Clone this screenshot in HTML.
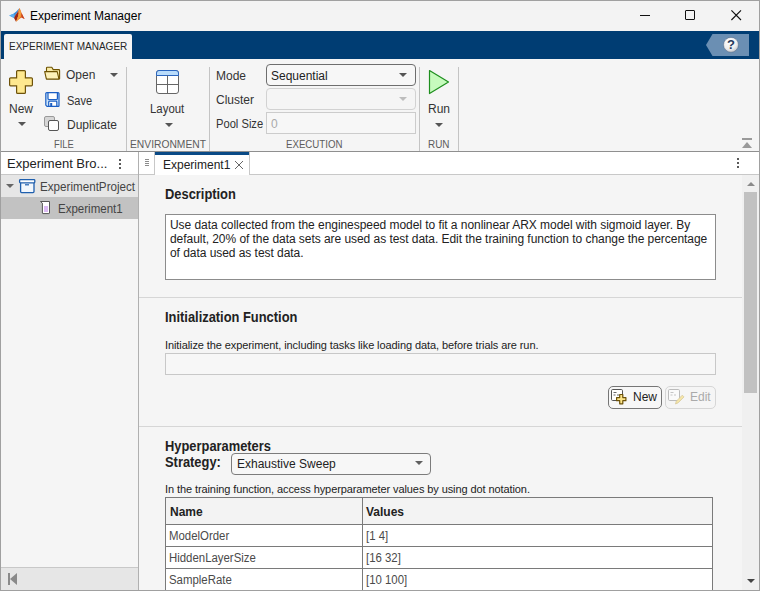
<!DOCTYPE html>
<html><head><meta charset="utf-8">
<style>
*{box-sizing:border-box;margin:0;padding:0}
html,body{width:760px;height:591px;overflow:hidden;background:#a8a8a8}
body{position:relative;font-family:"Liberation Sans",sans-serif;color:#222}
.a{position:absolute}
.t{position:absolute;white-space:nowrap;line-height:1}
.rb{font-size:12px;color:#333}
.sec{font-size:11px;color:#5c5c5c;transform-origin:50% 50%}
.vs{position:absolute;width:1px;background:#c4c4c4;top:67px;height:84px}
.arr{position:absolute;width:0;height:0;border-left:4px solid transparent;border-right:4px solid transparent;border-top:4px solid #555}
.h{position:absolute;white-space:nowrap;line-height:1;font-size:14px;font-weight:bold;color:#222;transform:scaleX(0.92);transform-origin:0 0}
</style></head><body>
<!-- window -->
<div class="a" style="left:1px;top:1px;width:758px;height:589px;background:#f3f3f3"></div>

<!-- title bar -->
<svg class="a" style="left:8px;top:7px" width="18" height="16" viewBox="0 0 18 16">
  <path d="M1.2 8.6 L5 7 L8 4.8 L10.4 2.2 L11.6 1 L10 4.5 L7.2 8.5 L6 10.9 Z" fill="#3a8ddb"/>
  <path d="M1.2 8.6 L5 7 L6.8 7.8 L6 10.9 Z" fill="#5cb0f2"/>
  <path d="M10 4.5 L7.2 8.5 L6 10.9 L8 14.8 L9.6 11 L10.9 6 Z" fill="#9c2414"/>
  <path d="M11.6 1 L13.6 6 L15 9.5 L16.6 11.9 L13.5 10.5 L10.5 12.5 L8 14.8 L9.6 11 L10.9 6 L10 4.5 Z" fill="#e56a26"/>
  <path d="M11.6 1 L12.9 5 L12.8 9.5 L10.5 12.5 L8 14.8 L9.6 11 L10.9 6 Z" fill="#f4a23a"/>
  <path d="M13.6 6 L16.6 11.9 L13.5 10.5 Z" fill="#c8431e"/>
</svg>
<div class="t" style="left:30px;top:10px;font-size:12px;color:#000">Experiment Manager</div>
<div class="a" style="left:640px;top:15px;width:10px;height:1px;background:#111"></div>
<div class="a" style="left:685px;top:10px;width:10px;height:10px;border:1px solid #111;border-radius:1px"></div>
<svg class="a" style="left:731px;top:10px" width="11" height="11" viewBox="0 0 11 11"><path d="M0.4 0.4 L10 10 M10 0.4 L0.4 10" stroke="#111" stroke-width="1.15"/></svg>

<!-- ribbon tab bar -->
<div class="a" style="left:1px;top:31px;width:758px;height:28px;background:#003d73"></div>
<div class="a" style="left:4px;top:34px;width:128px;height:25px;background:#f5f5f5;border-radius:2px 2px 0 0"></div>
<div class="t" style="left:9px;top:41px;font-size:11px;color:#262626;transform:scaleX(0.91);transform-origin:0 0">EXPERIMENT MANAGER</div>
<svg class="a" style="left:706px;top:34px" width="44" height="22" viewBox="0 0 44 22">
  <defs><radialGradient id="hg" cx="0.4" cy="0.3" r="0.8"><stop offset="0" stop-color="#ffffff"/><stop offset="0.6" stop-color="#eeeeee"/><stop offset="1" stop-color="#b8bcc4"/></radialGradient></defs>
  <path d="M6.5 0 H43 V22 H6.5 L0 11 Z" fill="#6b8fb3"/>
  <circle cx="25" cy="10.8" r="7.4" fill="url(#hg)" stroke="#3a4a64" stroke-width="0.6" stroke-opacity="0.6"/>
  <text x="25" y="15.3" font-family="Liberation Sans" font-weight="bold" font-size="13" text-anchor="middle" fill="#27395a">?</text>
</svg>

<!-- ribbon body -->
<div class="a" style="left:1px;top:59px;width:758px;height:92px;background:#f5f5f5"></div>
<div class="a" style="left:1px;top:151px;width:758px;height:1px;background:#8f8f8f"></div>

<!-- FILE section -->
<svg class="a" style="left:8px;top:69px" width="26" height="26" viewBox="0 0 26 26">
  <path d="M9.6 1.6 Q8.6 1.6 8.6 2.6 V8.8 H2.6 Q1.6 8.8 1.6 9.8 V15.8 Q1.6 16.8 2.6 16.8 H8.6 V23.4 Q8.6 24.4 9.6 24.4 H16.4 Q17.4 24.4 17.4 23.4 V16.8 H23.4 Q24.4 16.8 24.4 15.8 V9.8 Q24.4 8.8 23.4 8.8 H17.4 V2.6 Q17.4 1.6 16.4 1.6 Z" fill="#fee88f" stroke="#6e520a" stroke-width="1.2"/>
</svg>
<div class="t rb" style="left:9px;top:103px">New</div>
<div class="arr" style="left:18px;top:122px"></div>
<svg class="a" style="left:44px;top:66px" width="17" height="15" viewBox="0 0 17 15">
  <path d="M2.5 12.5 V2 Q2.5 1.2 3.3 1.2 H7.8 L9.2 3.6 H14.8 Q15.6 3.6 15.6 4.4 V12.8 Z" fill="#f8eaa6" stroke="#6e5200" stroke-width="1.1" stroke-linejoin="round"/>
  <path d="M0.7 5.6 H13.2 L15 13.1 H2.4 Z" fill="#fdf1b8" stroke="#6e5200" stroke-width="1.1" stroke-linejoin="round"/>
</svg>
<div class="t rb" style="left:66px;top:69px">Open</div>
<div class="arr" style="left:110px;top:73px"></div>
<svg class="a" style="left:44px;top:91px" width="17" height="17" viewBox="0 0 17 17">
  <path d="M1.8 2.6 Q1.8 1.6 2.8 1.6 H14 Q15 1.6 15 2.6 V14.7 Q15 15.3 14.4 15.3 H3 L1.8 14.1 Z" fill="#cde5fb" stroke="#1c5fc4" stroke-width="1.2" stroke-linejoin="round"/>
  <path d="M4 1.6 V7.6 Q4 8.5 4.9 8.5 H12.5 Q13.4 8.5 13.4 7.6 V1.6 Z" fill="#fff" stroke="#1c5fc4" stroke-width="1.2"/>
  <path d="M4.7 15.3 V11 Q4.7 10.2 5.5 10.2 H12 Q12.8 10.2 12.8 11 V15.3 Z" fill="#fff" stroke="#1c5fc4" stroke-width="1.2"/>
  <rect x="6.2" y="12" width="2" height="3.3" fill="#1c5fc4"/>
</svg>
<div class="t rb" style="left:67px;top:95px;transform:scaleX(0.92);transform-origin:0 0">Save</div>
<svg class="a" style="left:43px;top:115px" width="17" height="17" viewBox="0 0 17 17">
  <rect x="1.5" y="1.5" width="10" height="10" rx="1.5" fill="#d6d6d6" stroke="#9a9a9a"/>
  <rect x="5.5" y="5.5" width="10" height="10" rx="1.5" fill="#fff" stroke="#555"/>
</svg>
<div class="t rb" style="left:67px;top:119px">Duplicate</div>
<div class="t sec" style="left:54px;top:139px;transform:scaleX(0.85);transform-origin:0 0">FILE</div>
<div class="vs" style="left:126px"></div>

<!-- ENVIRONMENT -->
<svg class="a" style="left:155px;top:69px" width="26" height="26" viewBox="0 0 26 26">
  <rect x="1.5" y="1.5" width="22" height="23" rx="2.5" fill="#fff" stroke="#666"/>
  <path d="M1.5 6.5 V4 Q1.5 1.5 4 1.5 H21 Q23.5 1.5 23.5 4 V6.5 Z" fill="#b9dcfb" stroke="#2b66bf" stroke-width="1"/>
  <path d="M1.5 15.5 H23.5 M12.5 6.5 V24.5" stroke="#666" stroke-width="1"/>
</svg>
<div class="t rb" style="left:150px;top:103px;transform:scaleX(0.95);transform-origin:0 0">Layout</div>
<div class="arr" style="left:165px;top:123px"></div>
<div class="t sec" style="left:130px;top:139px;transform:scaleX(0.935);transform-origin:0 0">ENVIRONMENT</div>
<div class="vs" style="left:209px"></div>

<!-- EXECUTION -->
<div class="t rb" style="left:216px;top:70px">Mode</div>
<div class="a" style="left:266px;top:64px;width:150px;height:22px;border:1px solid #6e6e6e;border-radius:4px;background:#f7f7f7"></div>
<div class="t rb" style="left:271px;top:70px;color:#222">Sequential</div>
<div class="arr" style="left:399px;top:73px"></div>
<div class="t rb" style="left:216px;top:94px">Cluster</div>
<div class="a" style="left:266px;top:88px;width:150px;height:22px;border:1px solid #d2d2d2;border-radius:4px;background:#f5f5f5"></div>
<div class="arr" style="left:399px;top:97px;border-top-color:#bdbdbd"></div>
<div class="t rb" style="left:216px;top:118px;transform:scaleX(0.93);transform-origin:0 0">Pool Size</div>
<div class="a" style="left:266px;top:112px;width:150px;height:22px;border:1px solid #cccccc;background:#f7f7f7"></div>
<div class="t rb" style="left:271px;top:118px;color:#aaa">0</div>
<div class="t sec" style="left:286px;top:139px;transform:scaleX(0.88);transform-origin:0 0">EXECUTION</div>
<div class="vs" style="left:419px"></div>

<!-- RUN -->
<svg class="a" style="left:428px;top:69px" width="22" height="26" viewBox="0 0 22 26">
  <path d="M1.5 1.5 L20.5 13 L1.5 24.5 Z" fill="#c6fbbd" stroke="#1e8f1e" stroke-width="1.2" stroke-linejoin="round"/>
</svg>
<div class="t rb" style="left:428px;top:103px">Run</div>
<div class="arr" style="left:435px;top:123px"></div>
<div class="t sec" style="left:428px;top:139px;transform:scaleX(0.9);transform-origin:0 0">RUN</div>
<div class="vs" style="left:458px"></div>

<!-- collapse ribbon -->
<div class="a" style="left:742px;top:138px;width:10px;height:2px;background:#9a9a9a"></div>
<div class="a" style="left:742px;top:142px;width:0;height:0;border-left:5px solid transparent;border-right:5px solid transparent;border-bottom:6px solid #9a9a9a"></div>

<!-- left panel -->
<div class="a" style="left:1px;top:152px;width:137px;height:22px;background:#fff"></div>
<div class="a" style="left:1px;top:174px;width:137px;height:1px;background:#c8c8c8"></div>
<div class="a" style="left:1px;top:175px;width:137px;height:392px;background:#f5f5f5"></div>
<div class="t" style="left:7px;top:157px;font-size:13px;color:#222">Experiment Bro...</div>
<div class="a" style="left:119px;top:159px;width:2px;height:2px;background:#5a5a5a"></div>
<div class="a" style="left:119px;top:163px;width:2px;height:2px;background:#5a5a5a"></div>
<div class="a" style="left:119px;top:167px;width:2px;height:2px;background:#5a5a5a"></div>
<div class="a" style="left:1px;top:175px;width:137px;height:22px;background:#e6e6e6"></div>
<div class="a" style="left:6px;top:184px;width:0;height:0;border-left:4px solid transparent;border-right:4px solid transparent;border-top:4px solid #666"></div>
<svg class="a" style="left:18px;top:178px" width="18" height="16" viewBox="0 0 18 16">
  <path d="M2.6 4.5 V13.6 Q2.6 14.6 3.6 14.6 H15 Q16 14.6 16 13.6 V4.5" fill="#f2f7fd" stroke="#1f5fae" stroke-width="1.3"/>
  <rect x="1.6" y="1.6" width="15.2" height="3.2" rx="0.8" fill="#fff" stroke="#1f5fae" stroke-width="1.3"/>
  <path d="M7 6.8 H11" stroke="#1f5fae" stroke-width="1.2"/>
</svg>
<div class="t" style="left:40px;top:181px;font-size:12px;color:#444;transform:scaleX(0.97);transform-origin:0 0">ExperimentProject</div>
<div class="a" style="left:1px;top:197px;width:137px;height:22px;background:#c2c2c2"></div>
<svg class="a" style="left:39px;top:200px" width="12" height="15" viewBox="0 0 12 15">
  <path d="M1.5 1.5 H10.5 V13 Q10.5 13.6 9.9 13.6 H4 Q3.4 13.6 3.4 13 V3.2 Z" fill="#fff" stroke="#555" stroke-width="1" stroke-linejoin="round"/>
  <rect x="5" y="6" width="4" height="6" fill="#dcbaf4"/>
</svg>
<div class="t" style="left:58px;top:203px;font-size:12px;color:#444;transform:scaleX(0.96);transform-origin:0 0">Experiment1</div>
<div class="a" style="left:1px;top:567px;width:137px;height:1px;background:#c8c8c8"></div>
<div class="a" style="left:1px;top:568px;width:137px;height:22px;background:#e6e6e6"></div>
<div class="a" style="left:8px;top:573px;width:2px;height:12px;background:#8a8a8a"></div>
<div class="a" style="left:10px;top:573px;width:0;height:0;border-top:6px solid transparent;border-bottom:6px solid transparent;border-right:7px solid #8a8a8a"></div>
<div class="a" style="left:138px;top:152px;width:1px;height:438px;background:#b0b0b0"></div>

<!-- document strip -->
<div class="a" style="left:139px;top:152px;width:620px;height:22px;background:#fff"></div>
<div class="a" style="left:139px;top:174px;width:620px;height:1px;background:#c8c8c8"></div>
<div class="a" style="left:154px;top:152px;width:1px;height:22px;background:#c8c8c8"></div>
<div class="a" style="left:145px;top:159px;width:4px;height:1px;background:#8c8c8c"></div>
<div class="a" style="left:145px;top:161px;width:4px;height:1px;background:#8c8c8c"></div>
<div class="a" style="left:145px;top:163px;width:4px;height:1px;background:#8c8c8c"></div>
<div class="a" style="left:145px;top:165px;width:4px;height:1px;background:#8c8c8c"></div>
<div class="a" style="left:155px;top:152px;width:94px;height:23px;background:#fff"></div>
<div class="a" style="left:155px;top:152px;width:94px;height:3px;background:#0a4a86"></div>
<div class="a" style="left:249px;top:152px;width:1px;height:22px;background:#c8c8c8"></div>
<div class="t" style="left:163px;top:159px;font-size:12px;color:#222">Experiment1</div>
<svg class="a" style="left:234px;top:160px" width="10" height="10" viewBox="0 0 10 10"><path d="M1 1 L9 9 M9 1 L1 9" stroke="#555" stroke-width="0.9"/></svg>
<div class="a" style="left:737px;top:158px;width:2px;height:2px;background:#5a5a5a"></div>
<div class="a" style="left:737px;top:162px;width:2px;height:2px;background:#5a5a5a"></div>
<div class="a" style="left:737px;top:166px;width:2px;height:2px;background:#5a5a5a"></div>

<!-- content -->
<div class="a" style="left:139px;top:175px;width:620px;height:415px;background:#f5f5f5"></div>
<!-- scrollbar -->
<div class="a" style="left:742px;top:175px;width:17px;height:415px;background:#f0f0f0"></div>
<div class="a" style="left:747px;top:182px;width:0;height:0;border-left:4px solid transparent;border-right:4px solid transparent;border-bottom:4px solid #8a8a8a"></div>
<div class="a" style="left:744px;top:192px;width:13px;height:201px;background:#c1c1c1"></div>
<div class="a" style="left:747px;top:579px;width:0;height:0;border-left:4px solid transparent;border-right:4px solid transparent;border-top:4px solid #444"></div>

<div class="h" style="left:165px;top:187px">Description</div>
<div class="a" style="left:165px;top:214px;width:551px;height:66px;background:#fff;border:1px solid #8c8c8c"></div>
<div class="t" style="left:170px;top:218px;font-size:12px;line-height:14px;color:#222;letter-spacing:-0.05px">Use data collected from the enginespeed model to fit a nonlinear ARX model with sigmoid layer. By<br>default, 20% of the data sets are used as test data. Edit the training function to change the percentage<br>of data used as test data.</div>
<div class="a" style="left:139px;top:297px;width:603px;height:1px;background:#d6d6d6"></div>

<div class="h" style="left:165px;top:310px">Initialization Function</div>
<div class="t" style="left:165px;top:340px;font-size:11px;color:#222;letter-spacing:-0.09px">Initialize the experiment, including tasks like loading data, before trials are run.</div>
<div class="a" style="left:165px;top:353px;width:551px;height:22px;background:#f7f7f7;border:1px solid #c8c8c8"></div>
<div class="a" style="left:608px;top:386px;width:54px;height:23px;border:1px solid #767676;border-radius:5px;background:#f7f7f7"></div>
<svg class="a" style="left:610px;top:388px" width="19" height="19" viewBox="0 0 19 19">
  <rect x="1.5" y="1.5" width="11" height="11" rx="1.2" fill="#fff" stroke="#555"/>
  <path d="M3.5 4.5 H6.5 M3.5 7 H5.5 M7 7 H9" stroke="#666"/>
  <path d="M9.7 6.5 H12.8 V9.6 H15.9 V12.7 H12.8 V15.8 H9.7 V12.7 H6.6 V9.6 H9.7 Z" fill="#fde68a" stroke="#6d5208" stroke-width="1.2" stroke-linejoin="round"/>
</svg>
<div class="t" style="left:633px;top:391px;font-size:12px;color:#222">New</div>
<div class="a" style="left:665px;top:386px;width:51px;height:23px;border:1px solid #d6d6d6;border-radius:5px;background:#f5f5f5"></div>
<svg class="a" style="left:667px;top:388px" width="19" height="19" viewBox="0 0 19 19">
  <rect x="1.5" y="1.5" width="11" height="11" rx="1.2" fill="#fafafa" stroke="#bbb"/>
  <path d="M3.5 4.5 H6.5 M3.5 7 H5.5 M7 7 H9" stroke="#c4c4c4"/>
  <path d="M8.5 16 L9.3 13.2 L15.3 7.2 L17 8.9 L11 14.9 Z" fill="#f6e6a8" stroke="#d6c89a" stroke-width="0.8"/>
</svg>
<div class="t" style="left:690px;top:391px;font-size:12px;color:#aaa">Edit</div>
<div class="a" style="left:139px;top:426px;width:603px;height:1px;background:#d6d6d6"></div>

<div class="h" style="left:165px;top:439px">Hyperparameters</div>
<div class="h" style="left:165px;top:455px">Strategy:</div>
<div class="a" style="left:231px;top:453px;width:200px;height:22px;border:1px solid #7c7c7c;border-radius:4px;background:#f7f7f7"></div>
<div class="t" style="left:237px;top:458px;font-size:12px;color:#222">Exhaustive Sweep</div>
<div class="arr" style="left:415px;top:461px;border-top-color:#606060"></div>
<div class="t" style="left:165px;top:484px;font-size:11px;color:#222;letter-spacing:-0.09px">In the training function, access hyperparameter values by using dot notation.</div>
<!-- table -->
<div class="a" style="left:165px;top:497px;width:548px;height:100px;background:#fff;border:1px solid #7a7a7a"></div>
<div class="a" style="left:166px;top:498px;width:546px;height:26px;background:#f3f3f3"></div>
<div class="a" style="left:166px;top:524px;width:546px;height:1px;background:#7a7a7a"></div>
<div class="a" style="left:166px;top:546px;width:546px;height:1px;background:#7a7a7a"></div>
<div class="a" style="left:166px;top:568px;width:546px;height:1px;background:#7a7a7a"></div>
<div class="a" style="left:362px;top:498px;width:1px;height:100px;background:#7a7a7a"></div>
<div class="t" style="left:170px;top:506px;font-size:12px;font-weight:bold;color:#222">Name</div>
<div class="t" style="left:366px;top:506px;font-size:12px;font-weight:bold;color:#222">Values</div>
<div class="t" style="left:169px;top:530px;font-size:12px;color:#4a4a4a;transform:scaleX(0.95);transform-origin:0 0">ModelOrder</div>
<div class="t" style="left:366px;top:530px;font-size:12px;color:#4a4a4a;transform:scaleX(0.95);transform-origin:0 0">[1 4]</div>
<div class="t" style="left:169px;top:552px;font-size:12px;color:#4a4a4a;transform:scaleX(0.95);transform-origin:0 0">HiddenLayerSize</div>
<div class="t" style="left:366px;top:552px;font-size:12px;color:#4a4a4a;transform:scaleX(0.95);transform-origin:0 0">[16 32]</div>
<div class="t" style="left:169px;top:574px;font-size:12px;color:#4a4a4a;transform:scaleX(0.95);transform-origin:0 0">SampleRate</div>
<div class="t" style="left:366px;top:574px;font-size:12px;color:#4a4a4a;transform:scaleX(0.95);transform-origin:0 0">[10 100]</div>

<!-- window borders -->
<div class="a" style="left:0;top:0;width:760px;height:1px;background:#a0a0a0"></div>
<div class="a" style="left:0;top:0;width:1px;height:591px;background:#a0a0a0"></div>
<div class="a" style="left:759px;top:0;width:1px;height:591px;background:#a0a0a0"></div>
<div class="a" style="left:0;top:590px;width:760px;height:1px;background:#a0a0a0"></div>
</body></html>
